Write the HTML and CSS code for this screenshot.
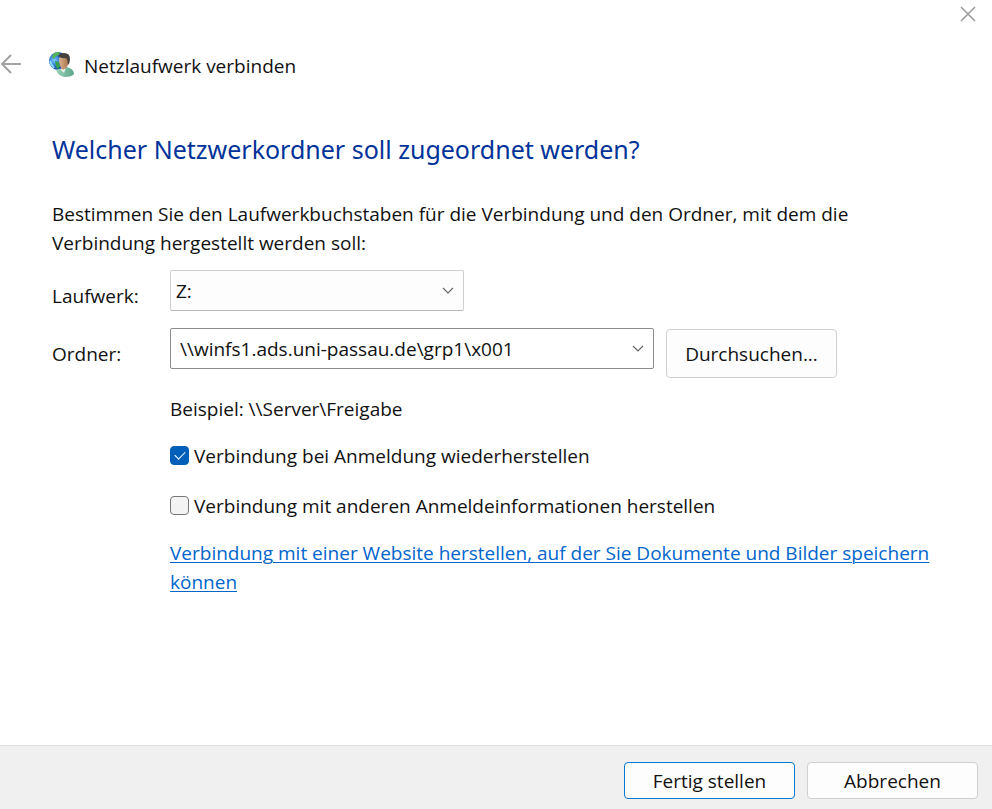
FILE: index.html
```
<!DOCTYPE html>
<html lang="de">
<head>
    <meta charset="UTF-8">
    <meta name="viewport" content="width=device-width, initial-scale=1.0">
    <link rel="stylesheet" href="styles.css">
    <title>Netzlaufwerk verbinden</title>
</head>
<body>
    <div class="titlebar">
        <button type="button" class="icon-btn" aria-label="Schließen">
            <svg width="16" height="16" viewBox="0 0 16 16"><path d="M1 1 L15 15 M15 1 L1 15" fill="none" stroke="#999" stroke-width="1.5"/></svg>
        </button>
    </div>
    <header class="header">
        <button type="button" class="icon-btn" aria-label="Zurück">
            <svg width="22" height="22" viewBox="0 0 22 22"><path d="M21 10 H2 M11 1 L2 10 L11 19" fill="none" stroke="#a3a3a3" stroke-width="2"/></svg>
        </button>
        <svg class="logo" width="28" height="28" viewBox="0 0 28 28">
            <defs>
                <radialGradient id="globe" cx="0.3" cy="0.45" r="0.7">
                    <stop offset="0" stop-color="#7fd0fa"/>
                    <stop offset="0.5" stop-color="#2468cf"/>
                    <stop offset="1" stop-color="#122c86"/>
                </radialGradient>
                <linearGradient id="face" x1="0" x2="1">
                    <stop offset="0" stop-color="#ddb28c"/>
                    <stop offset="1" stop-color="#a5724c"/>
                </linearGradient>
                <linearGradient id="coat" x1="0" x2="1">
                    <stop offset="0" stop-color="#9ad0b8"/>
                    <stop offset="1" stop-color="#5aa88b"/>
                </linearGradient>
            </defs>
            <circle cx="10" cy="10" r="9" fill="url(#globe)"/>
            <path d="M5 3 Q8 1 12 1 L11 4 L8 5 L6 8 L4 7 Z" fill="#54b653"/>
            <path d="M7 10 L11 11 L12 15 L10 18 L8 16 Z" fill="#35a24b"/>
            <path d="M2 10 Q3 14 6 17" fill="none" stroke="#8bdcf2" stroke-width="2"/>
            <path d="M8 19 Q11 17 14 18 L19 16 Q26 18 26 23 Q24 26 17 26 Q11 26 8 19 Z" fill="url(#coat)"/>
            <path d="M12 18 L16 22 L18 16 Z" fill="#eef5f0"/>
            <path d="M11 7 Q16 3 20 7 Q22 12 18 17 L15 19 Q11 16 11 7 Z" fill="url(#face)"/>
            <path d="M10 5 Q12 2 16 2 Q22 2 22 8 Q22 12 20 14 Q20 9 18 7 Q14 8 10 5 Z" fill="#46413d"/>
        </svg>
        <span class="title">Netzlaufwerk verbinden</span>
    </header>
    <main class="content">
        <h1>Welcher Netzwerkordner soll zugeordnet werden?</h1>
        <p class="intro">Bestimmen Sie den Laufwerkbuchstaben für die Verbindung und den Ordner, mit dem die Verbindung hergestellt werden soll:</p>
        <form class="form" id="mapForm">
            <label for="drive">Laufwerk:</label>
            <div class="combo combo-drive">
                <select id="drive">
                    <option>Z:</option>
                    <option>Y:</option>
                    <option>X:</option>
                </select>
                <svg class="chevron" width="12" height="8" viewBox="0 0 12 8"><path d="M1 1 L6 6 L11 1" fill="none" stroke="#666" stroke-width="1.2"/></svg>
            </div>
            <label for="folder">Ordner:</label>
            <div class="folder-row">
                <div class="combo combo-folder">
                    <input type="text" id="folder" value="\\winfs1.ads.uni-passau.de\grp1\x001">
                    <svg class="chevron" width="12" height="8" viewBox="0 0 12 8"><path d="M1 1 L6 6 L11 1" fill="none" stroke="#666" stroke-width="1.2"/></svg>
                </div>
                <button type="button" class="btn btn-browse">Durchsuchen...</button>
            </div>
            <div class="options">
                <p class="example">Beispiel: \\Server\Freigabe</p>
                <div class="check">
                    <input type="checkbox" id="reconnect" checked>
                    <label for="reconnect">Verbindung bei Anmeldung wiederherstellen</label>
                </div>
                <div class="check">
                    <input type="checkbox" id="credentials">
                    <label for="credentials">Verbindung mit anderen Anmeldeinformationen herstellen</label>
                </div>
                <a href="#">Verbindung mit einer Website herstellen, auf der Sie Dokumente und Bilder speichern können</a>
            </div>
        </form>
    </main>
    <footer class="footer">
        <button type="submit" form="mapForm" class="btn btn-primary">Fertig stellen</button>
        <button type="button" class="btn">Abbrechen</button>
    </footer>
</body>
</html>
```
FILE: styles.css
```
* {
    box-sizing: border-box;
    margin: 0;
    padding: 0;
}

body {
    min-height: 100vh;
    display: flex;
    flex-direction: column;
    background-color: #fff;
    color: #111;
    font-family: "Open Sans", "Noto Sans", sans-serif;
    font-size: 19px;
    line-height: 29px;
}

button,
input,
select {
    font: inherit;
    color: inherit;
}

svg {
    display: block;
}

.titlebar {
    display: flex;
    justify-content: flex-end;
    padding: 6px 16px;
}

.icon-btn {
    border: none;
    background: none;
}

.header {
    display: flex;
    align-items: center;
    padding-top: 20px;
}

.title {
    padding-top: 4px;
}

.logo {
    margin-left: 26px;
    margin-right: 8px;
}

.content {
    flex: 1;
    padding: 50px 52px 24px;
}

h1 {
    font-family: "Noto Sans", "Open Sans", sans-serif;
    font-size: 25px;
    font-weight: 400;
    line-height: 36px;
    color: #003399;
}

.intro {
    margin-top: 33px;
}

.form {
    display: grid;
    grid-template-columns: 118px 1fr;
    row-gap: 17px;
    margin-top: 12px;
}

.form > label {
    padding-top: 12px;
}

.combo {
    position: relative;
    height: 41px;
}

.combo select,
.combo input {
    width: 100%;
    height: 100%;
    border: 1px solid #d0d0d0;
    border-radius: 2px;
    background-color: #fdfdfd;
    appearance: none;
}

.combo select {
    padding: 2px 5px 0;
    border-bottom-color: #b8b8b8;
}

.combo input {
    padding: 0 32px 0 9px;
    border-color: #8c8c8c;
    background-color: #fff;
}

.combo-drive {
    width: 294px;
}

.combo-folder {
    width: 484px;
}

.chevron {
    position: absolute;
    right: 10px;
    top: 17px;
    pointer-events: none;
}

.folder-row {
    display: flex;
    gap: 12px;
}

.btn {
    width: 171px;
    height: 37px;
    padding-top: 2px;
    border: 1px solid #d0d0d0;
    border-radius: 4px;
    background-color: #fdfdfd;
}

.btn-browse {
    height: 49px;
    margin-top: 1px;
}

.btn-primary {
    border-color: #0078d4;
}

.options {
    grid-column: 2;
}

.check {
    display: flex;
    align-items: center;
    gap: 5px;
    margin-top: 18px;
}

.check + .check {
    margin-top: 21px;
}

.check input {
    width: 19px;
    height: 19px;
    margin-bottom: 2px;
    border: 1px solid #767676;
    border-radius: 4px;
    background-color: #f3f3f3;
    appearance: none;
}

.check input:checked {
    display: grid;
    place-items: center;
    border-color: #005fb8;
    background-color: #005fb8;
}

.check input:checked::before {
    content: "";
    width: 9px;
    height: 5px;
    margin-bottom: 3px;
    border-left: 1px solid #fff;
    border-bottom: 1px solid #fff;
    transform: rotate(-45deg);
}

a {
    display: block;
    margin-top: 18px;
    color: #0066cc;
    text-underline-offset: 2px;
    text-decoration-thickness: 1px;
}

.footer {
    display: flex;
    justify-content: flex-end;
    gap: 12px;
    padding: 16px 14px 10px;
    border-top: 1px solid #dfdfdf;
    background-color: #f0f0f0;
}
```
